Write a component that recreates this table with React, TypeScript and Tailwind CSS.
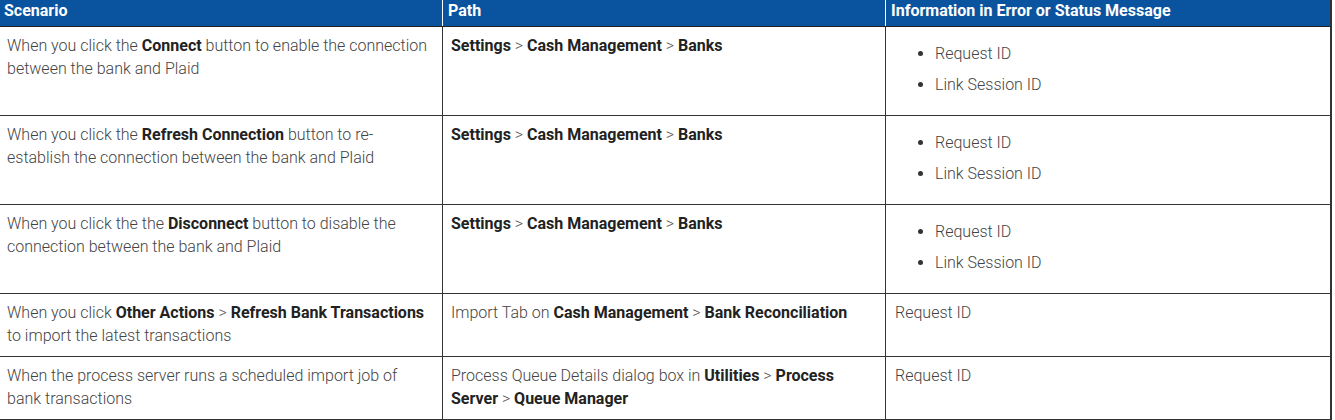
import React from "react";

const B = ({ children }: { children: React.ReactNode }) => (
  <strong className="font-bold text-[#222]">{children}</strong>
);
const Gt = () => <span className="text-[#555]"> &gt; </span>;

const cell = "align-top border border-[#333] pr-[7px] pt-[7px] pb-[9px]";
const c1 = cell + " pl-[7px]";
const c2 = cell + " pl-[8px]";
const c3 = cell + " pl-[9px] border-r-2";

const IdList = () => (
  <ul className="list-disc pl-[40px] mt-2 mb-[10px] space-y-2 marker:text-[#333]">
    <li>Request ID</li>
    <li>Link Session ID</li>
  </ul>
);

const th = "text-left font-bold text-[16px] leading-[22px] pb-[4px] border-b border-b-[#222]";

export default function App() {
  return (
    <div
      className="bg-white w-[1335px] h-[420px] overflow-hidden"
      style={{ fontFamily: "Roboto, 'Liberation Sans', sans-serif" }}
    >
      <table className="border-collapse table-fixed w-[1331px] -ml-px text-[16px] leading-[23px] font-light text-[#444]">
        <colgroup>
          <col className="w-[443px]" />
          <col className="w-[443px]" />
          <col className="w-[445px]" />
        </colgroup>
        <thead>
          <tr className="bg-[#0a549f] text-white">
            <th className={th + " px-[4px] border-l border-r border-l-[#0a549f] border-r-white"}>
              Scenario
            </th>
            <th className={th + " px-[5px] border-l border-r border-l-white border-r-white"}>
              Path
            </th>
            <th className={th + " px-[5px] border-l border-l-white border-r-2 border-r-[#333]"}>
              Information in Error or Status Message
            </th>
          </tr>
        </thead>
        <tbody>
          <tr>
            <td className={c1}>
              When you click the <B>Connect</B> button to enable the connection between the bank and Plaid
            </td>
            <td className={c2}>
              <B>Settings</B>
              <Gt />
              <B>Cash Management</B>
              <Gt />
              <B>Banks</B>
            </td>
            <td className={c3}>
              <IdList />
            </td>
          </tr>
          <tr>
            <td className={c1}>
              When you click the <B>Refresh Connection</B> button to re-establish the connection between the bank and Plaid
            </td>
            <td className={c2}>
              <B>Settings</B>
              <Gt />
              <B>Cash Management</B>
              <Gt />
              <B>Banks</B>
            </td>
            <td className={c3}>
              <IdList />
            </td>
          </tr>
          <tr>
            <td className={c1}>
              When you click the the <B>Disconnect</B> button to disable the connection between the bank and Plaid
            </td>
            <td className={c2}>
              <B>Settings</B>
              <Gt />
              <B>Cash Management</B>
              <Gt />
              <B>Banks</B>
            </td>
            <td className={c3}>
              <IdList />
            </td>
          </tr>
          <tr>
            <td className={c1}>
              When you click <B>Other Actions</B>
              <Gt />
              <B>Refresh Bank Transactions</B> to import the latest transactions
            </td>
            <td className={c2}>
              Import Tab on <B>Cash Management</B>
              <Gt />
              <B>Bank Reconciliation</B>
            </td>
            <td className={c3}>Request ID</td>
          </tr>
          <tr>
            <td className={c1}>
              When the process server runs a scheduled import job of bank transactions
            </td>
            <td className={c2}>
              Process Queue Details dialog box in <B>Utilities</B>
              <Gt />
              <B>Process Server</B>
              <Gt />
              <B>Queue Manager</B>
            </td>
            <td className={c3}>Request ID</td>
          </tr>
        </tbody>
      </table>
    </div>
  );
}
